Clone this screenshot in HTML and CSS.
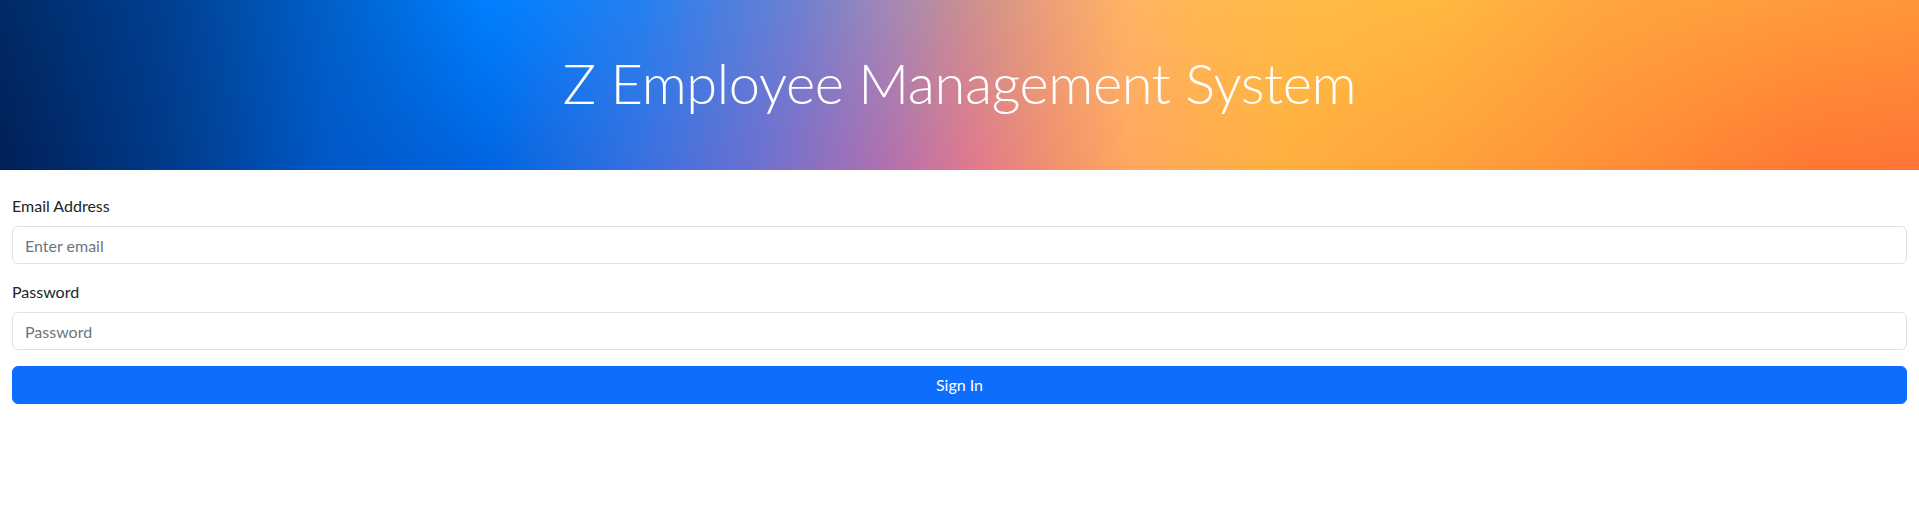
FILE: index.html
```html
<!DOCTYPE html>
<html lang="en">
<head>
<meta charset="utf-8">
<title>Z Employee Management System</title>
<link rel="stylesheet" href="styles.css">
</head>
<body>
  <header class="hero">
    <h1 class="hero-title">Z Employee Management System</h1>
  </header>
  <main class="container">
    <form class="login-form">
      <div class="field">
        <label class="field-label" for="email">Email Address</label>
        <input class="field-input" id="email" type="email" placeholder="Enter email">
      </div>
      <div class="field">
        <label class="field-label" for="password">Password</label>
        <input class="field-input" id="password" type="password" placeholder="Password">
      </div>
      <button class="btn-primary" type="button">Sign In</button>
    </form>
  </main>
</body>
</html>
```

FILE: styles.css
```css
* { box-sizing: border-box; }

html, body {
  margin: 0;
  padding: 0;
  background: #fff;
}

body {
  font-family: "Lato", "Liberation Sans", sans-serif;
  font-size: 16px;
  line-height: 1.5;
  color: #212529;
}

.hero {
  position: relative;
  height: 170px;
  padding-bottom: 5px;
  display: flex;
  align-items: center;
  justify-content: center;
  overflow: hidden;
  background: linear-gradient(to right,
    #002058 0%,
    #003a88 8.5%,
    #0058c8 17%,
    #0065e0 25.5%,
    #3a70e0 33.4%,
    #7070d0 39.7%,
    #b070b0 46.1%,
    #e07890 50.4%,
    #f09070 54.6%,
    #ffa860 58.9%,
    #ffb040 66.7%,
    #ffa23c 75.1%,
    #ff9038 83.6%,
    #ff7833 94.3%,
    #ff7535 100%);
}

.hero::before {
  content: "";
  position: absolute;
  inset: 0;
  background: linear-gradient(to right,
    #002a66 0%,
    #003f90 8.5%,
    #0060c8 17%,
    #0080ff 25.5%,
    #2580f0 33.4%,
    #7080d0 41.8%,
    #a088b8 46.1%,
    #c89090 50.4%,
    #eca078 54.6%,
    #ffb464 58.9%,
    #ffb850 63.1%,
    #ffbb45 68.8%,
    #ffb840 75.1%,
    #ffa540 83.6%,
    #ff963a 100%);
  -webkit-mask-image: linear-gradient(to bottom, #000 0%, transparent 100%);
  mask-image: linear-gradient(to bottom, #000 0%, transparent 100%);
}

.hero-title {
  position: relative;
  margin: 0;
  font-family: "Lato", "Liberation Sans", sans-serif;
  font-weight: 300;
  font-size: 56px;
  letter-spacing: -0.4px;
  line-height: 1.2;
  color: #fff;
}

.container {
  padding: 0 12px;
  margin-top: 24px;
}

.field {
  margin-bottom: 16px;
}

.field-label {
  display: block;
  margin-bottom: 8px;
}

.field-input {
  display: block;
  width: 100%;
  height: 38px;
  padding: 6px 12px;
  font-family: inherit;
  font-size: 16px;
  line-height: 1.5;
  color: #212529;
  background: #fff;
  border: 1px solid #dee2e6;
  border-radius: 6px;
  outline: none;
}

.field-input::placeholder {
  color: #6c757d;
  opacity: 1;
}

.btn-primary {
  display: block;
  width: 100%;
  height: 38px;
  padding: 6px 12px;
  font-family: inherit;
  font-size: 16px;
  line-height: 1.5;
  color: #fff;
  background: #0d6efd;
  border: 1px solid #0d6efd;
  border-radius: 6px;
  cursor: pointer;
}
```
